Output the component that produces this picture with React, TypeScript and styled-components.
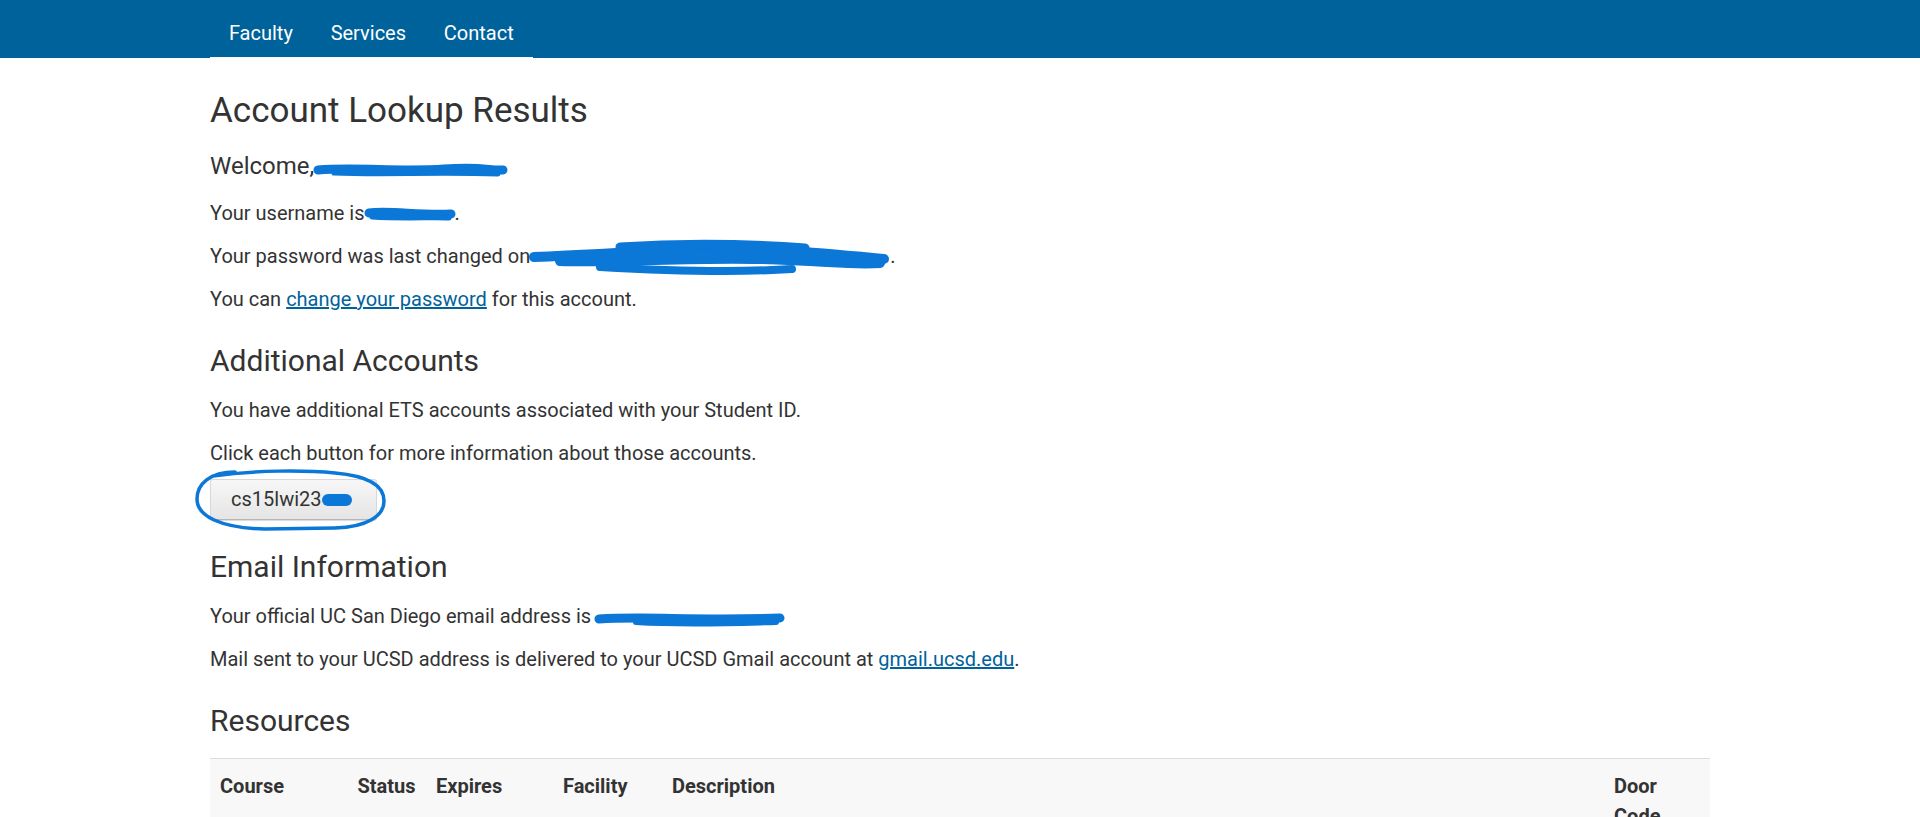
import React from "react";
import styled, { createGlobalStyle } from "styled-components";

const GlobalStyle = createGlobalStyle`
  html, body { margin: 0; padding: 0; background: #fff; }
  body {
    font-family: Roboto, "Liberation Sans", Arial, sans-serif;
    font-size: 20px;
    line-height: 29px;
    color: #333;
  }
  * { box-sizing: border-box; }
`;

const INK = "#0b77d7";

const Header = styled.header`
  background: #00629b;
  height: 58px;
`;

const Container = styled.div`
  max-width: 1530px;
  margin: 0 auto;
  padding: 0 15px;
`;

const Nav = styled.nav`
  display: inline-flex;
  height: 58px;
  border-bottom: 1px solid #fff;
`;

const NavLink = styled.a`
  display: block;
  padding: 19px 18.9px 0;
  color: #fff;
  text-decoration: none;
  font-size: 20px;
  line-height: 29px;
`;

const Main = styled(Container)`
  padding-top: 32px;
`;

const Title = styled.h1`
  font-size: 35px;
  line-height: 42px;
  font-weight: 400;
  margin: 0 0 20px;
  color: #333;
`;

const Welcome = styled.h2`
  font-size: 24px;
  line-height: 28.8px;
  font-weight: 400;
  margin: 0 0 18px;
  color: #333;
`;

const SectionTitle = styled.h3`
  font-size: 30px;
  line-height: 36px;
  font-weight: 400;
  margin: 29px 0 17px;
  color: #333;
`;

const P = styled.p`
  margin: 0 0 14px;
  font-size: 20px;
  line-height: 29px;
`;

const Link = styled.a`
  color: #00629b;
  text-decoration: underline;
`;

const ButtonRow = styled.div`
  position: relative;
  margin-top: -3px;
  display: flex;
`;

const AccountButton = styled.button`
  font-family: Roboto, "Liberation Sans", Arial, sans-serif;
  font-size: 20px;
  line-height: 29px;
  color: #333;
  padding: 5px 20px;
  background: linear-gradient(to bottom, #f7f7f7, #e5e5e5);
  border: 1px solid #d8d8d8;
  border-bottom-color: #b5b5b5;
  border-radius: 3px;
  box-shadow: 0 1px 1px rgba(0, 0, 0, 0.15);
  white-space: nowrap;
  cursor: pointer;
`;

const Ring = styled.svg`
  position: absolute;
  left: -15px;
  top: -11px;
  width: 192px;
  height: 64px;
  overflow: visible;
  pointer-events: none;
`;

const ScribbleSvg = styled.svg`
  display: inline-block;
  height: 14px;
  vertical-align: -1px;
  overflow: visible;
`;

const Table = styled.table`
  width: 100%;
  margin-top: 19px;
  border-collapse: collapse;
  table-layout: fixed;
`;

const Th = styled.th`
  background: #f8f8f8;
  border-top: 1px solid #dddddd;
  padding: 12px 10px 10px;
  text-align: left;
  vertical-align: top;
  font-weight: 700;
  font-size: 20px;
  line-height: 30px;
  color: #333;
`;

type Stroke = { d: string; w: number };

const Scribble: React.FC<{ width: number; strokes: Stroke[] }> = ({ width, strokes }) => (
  <ScribbleSvg width={width} viewBox={`0 0 ${width} 14`} aria-hidden="true">
    {strokes.map((s, i) => (
      <path
        key={i}
        d={s.d}
        fill="none"
        stroke={INK}
        strokeWidth={s.w}
        strokeLinecap="round"
        strokeLinejoin="round"
      />
    ))}
  </ScribbleSvg>
);

const columns: { label: React.ReactNode; width: number }[] = [
  { label: "Course", width: 137.5 },
  { label: "Status", width: 78.5 },
  { label: "Expires", width: 127 },
  { label: "Facility", width: 109 },
  { label: "Description", width: 942 },
  { label: "Door Code", width: 106 },
];

export default function App() {
  return (
    <>
      <GlobalStyle />
      <Header>
        <Container>
          <Nav>
            <NavLink href="#">Faculty</NavLink>
            <NavLink href="#">Services</NavLink>
            <NavLink href="#">Contact</NavLink>
          </Nav>
        </Container>
      </Header>
      <Main>
        <Title>Account Lookup Results</Title>
        <Welcome>
          Welcome,
          <Scribble
            width={193}
            strokes={[
              { d: "M4 9 C 40 6, 90 11, 130 8 S 175 10, 189 9", w: 9 },
              { d: "M20 12 C 70 14, 120 11, 184 13", w: 5 },
            ]}
          />
        </Welcome>
        <P>
          Your username is
          <Scribble
            width={90}
            strokes={[
              { d: "M4 6 C 25 3, 55 9, 86 7", w: 9 },
              { d: "M7 10 C 40 12, 70 10, 84 11", w: 5 },
            ]}
          />
          .
        </P>
        <P>
          Your password was last changed on
          <Scribble
            width={360}
            strokes={[
              { d: "M4 7 C 60 5, 110 1, 170 -1 S 290 3, 354 9", w: 10 },
              { d: "M30 11 C 90 13, 160 7, 230 9 S 320 15, 350 13", w: 10 },
              { d: "M90 -3 C 150 -7, 220 -6, 275 -2", w: 9 },
              { d: "M70 17 C 140 21, 200 23, 262 19", w: 8 },
              { d: "M110 3 C 170 4, 230 6, 300 8", w: 10 },
            ]}
          />
          .
        </P>
        <P>
          You can <Link href="#">change your password</Link> for this account.
        </P>

        <SectionTitle>Additional Accounts</SectionTitle>
        <P>You have additional ETS accounts associated with your Student ID.</P>
        <P>Click each button for more information about those accounts.</P>
        <ButtonRow>
          <AccountButton type="button">
            cs15lwi23
            <Scribble width={34} strokes={[{ d: "M6 7 L24 7", w: 12 }]} />
          </AccountButton>
          <Ring viewBox="0 0 192 64" aria-hidden="true">
            <path
              d="M40 4 C 15 4, 2 16, 2 31 C 2 48, 25 60, 70 61 L 140 60 C 172 59, 189 48, 189 33 C 189 18, 175 8, 140 5 C 110 2, 60 2, 18 8"
              fill="none"
              stroke={INK}
              strokeWidth={3.5}
              strokeLinecap="round"
            />
          </Ring>
        </ButtonRow>

        <SectionTitle>Email Information</SectionTitle>
        <P>
          Your official UC San Diego email address is{" "}
          <Scribble
            width={188}
            strokes={[
              { d: "M3 9 C 50 6, 100 11, 184 8", w: 9 },
              { d: "M40 12 C 90 15, 140 13, 180 12", w: 6 },
            ]}
          />
        </P>
        <P>
          Mail sent to your UCSD address is delivered to your UCSD Gmail account at{" "}
          <Link href="#">gmail.ucsd.edu</Link>.
        </P>

        <SectionTitle>Resources</SectionTitle>
        <Table>
          <colgroup>
            {columns.map((c, i) => (
              <col key={i} style={{ width: `${c.width}px` }} />
            ))}
          </colgroup>
          <thead>
            <tr>
              {columns.map((c, i) => (
                <Th key={i}>{c.label}</Th>
              ))}
            </tr>
          </thead>
        </Table>
      </Main>
    </>
  );
}
